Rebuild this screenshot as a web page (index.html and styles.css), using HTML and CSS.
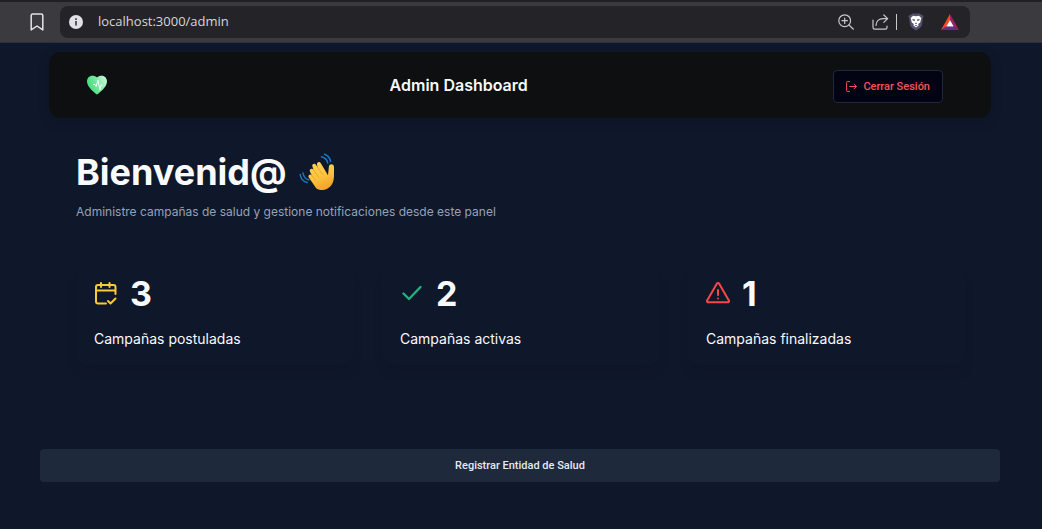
FILE: index.html
```html
<!DOCTYPE html>
<html lang="es">
<head>
<meta charset="utf-8">
<meta name="viewport" content="width=device-width, initial-scale=1">
<title>Admin Dashboard</title>
<link rel="stylesheet" href="styles.css">
</head>
<body>
<div class="toolbar">
  <button class="tool bookmark" aria-label="Guardar marcador">
    <svg width="14" height="18" viewBox="0 0 14 18"><path d="M1.2 2.5a1.6 1.6 0 0 1 1.6-1.6h8.4a1.6 1.6 0 0 1 1.6 1.6v14.4L7 13 1.2 16.900z" fill="none" stroke="#e4e3e8" stroke-width="1.5" stroke-linejoin="round"/></svg>
  </button>
  <div class="address">
    <svg width="14" height="14" viewBox="0 0 14 14"><circle cx="7" cy="7" r="7" fill="#e2e1e8"/><path d="M6.100 6h1.800v4.600H6.100zM6.100 3.200h1.800v1.700H6.100z" fill="#4a494f"/></svg>
    <div class="url-box"><input class="url" type="text" aria-label="Dirección" value="localhost:3000/admin"></div>
    <div class="actions">
      <button class="tool" aria-label="Zoom">
        <svg width="16" height="16" viewBox="0 0 16 16" fill="none" stroke="#c8c7cc" stroke-width="1.200" stroke-linecap="round"><circle cx="6.700" cy="6.700" r="5.900"/><path d="M11 11l4.400 4.200M6.700 4v5.400M4 6.700h5.400"/></svg>
      </button>
      <button class="tool share" aria-label="Compartir">
        <svg width="17" height="16" viewBox="0 0 17 16" fill="none" stroke="#c8c7cc" stroke-width="1.200" stroke-linecap="round" stroke-linejoin="round"><path d="M1 6v7.500A1.700 1.700 0 0 0 2.700 15.200h10.600a1.700 1.700 0 0 0 1.700-1.700V12"/><path d="M4 11.500C4.200 7.300 7 4.600 11 4.600h4.500M11.800 1l3.900 3.600-3.900 3.800"/></svg>
      </button>
      <span class="divider"></span>
      <button class="tool shield" aria-label="Shields">
        <svg width="16" height="18" viewBox="0 0 16 18"><path d="M4 .6h8l1.200 1.300 1.400-.2.900 2.300-.6 1.400-1 7-2 2.500L8 17.600l-3.900-2.700-2-2.500-1-7L.5 4l.9-2.300 1.400.2z" fill="#50526b"/><path d="M5 2.800l3 .5 3-.5 2.300 2.200-.4 1.800-.7 2.600-2 1.600.4 1.600L8 14.600 5.400 12.600l.4-1.600-2-1.600-.7-2.600L2.700 5z" fill="#fff"/><path d="M4.300 6l2.700.5-.3 1.500-1.900-.4zM11.700 6L9 6.500l.3 1.500 1.900-.4zM6.800 10.200L8 11l1.200-.8L8 9.600zM6.500 12.500L8 11.900l1.500.6L8 13.300z" fill="#50526b"/></svg>
      </button>
      <button class="tool" aria-label="Rewards">
        <svg width="18" height="16" viewBox="0 0 18 16"><path d="M9 0L0 16l5.500-3.400L9 6z" fill="#ff4724"/><path d="M9 0l9 16-5.500-3.400L9 6z" fill="#9e1f63"/><path d="M0 16h18l-5.500-3.400h-7z" fill="#662d91"/><path d="M9 6l3.700 6.600H5.300z" fill="#fff"/></svg>
      </button>
    </div>
  </div>
</div>

<header class="header">
  <a class="logo" href="#" aria-label="Inicio">
    <svg width="22" height="20" viewBox="0 0 22 20"><defs><linearGradient id="heart" x1="0.100" y1="0.600" x2="0.900" y2="0.300"><stop offset="0" stop-color="#4ade80"/><stop offset=".45" stop-color="#6ce79a"/><stop offset="1" stop-color="#b9f3cd"/></linearGradient></defs><path d="M11 19.500C9.800 18.600 1 12.600 1 6.500 1 3 3.300.7 6.200.7c2 0 3.700.6 4.800 1.900C12.100 1.300 13.800.7 15.800.7 18.700.7 21 3 21 6.500c0 6.100-8.800 12.100-10 13z" fill="url(#heart)"/><path d="M7 9.500h2l1.200 2 1.700-6.500 2 10 1.300-5.500 1.200 1.300" fill="none" stroke="#f1fff5" stroke-width="1" stroke-linejoin="round"/></svg>
  </a>
  <h2 class="title">Admin Dashboard</h2>
  <button class="logout">
    <svg width="11" height="11" viewBox="0 0 11 11" fill="none" stroke="currentColor" stroke-width="1" stroke-linecap="round" stroke-linejoin="round"><path d="M3.500.6H1.300a.7.7 0 0 0-.7.700v8.400a.7.700 0 0 0 .7.700h2.200M3.700 5.500h6.600M8 3.100l2.400 2.400L8 7.900"/></svg>
    Cerrar Sesión
  </button>
</header>

<main>
  <section class="welcome">
    <h1 class="greeting">Bienvenid@
      <svg width="38" height="38" viewBox="0 0 38 38" role="img" aria-label="Saludo"><defs><linearGradient id="hand" x1="0" y1="0" x2=".4" y2="1"><stop offset="0" stop-color="#ffd45c"/><stop offset=".6" stop-color="#fdc43c"/><stop offset="1" stop-color="#f3a62e"/></linearGradient></defs>
        <g fill="none" stroke="#1c79bd" stroke-width="1.500" stroke-linecap="round"><path d="M22.500 3.800c3.500.8 5.600 3 6.300 6.300M25.500 1.200c3.500 1.200 5.500 3.700 6 7.300M4 20c.6 3.700 2.500 6 5.800 7M1.200 21.500c.6 4.300 3 7 6.800 8"/></g>
        <path d="M17 35L9.800 24.500c-1.500-2.200 1.500-4.200 3-2.200L11 18.800c-1.200-2.500 2-4.200 3.500-2l-1-3c-1-2.700 2-4.200 3.500-2l1.500 2.400-.5-2.700c-.3-2.700 2.700-3.500 3.800-1.200l7.200 12 .9-8.800c.3-2.800 4.800-3 5.100.2.200 2-.1 4.200 0 6.500.2 7.800-1.400 11.500-5 14.300-4.400 3.300-9.800 3.500-13 .5z" fill="url(#hand)"/>
        <path d="M12.800 22.300l4 5.300M14.500 16.800l5.300 7.800M18.500 14.200l5.200 7.500" fill="none" stroke="#eba935" stroke-width="1" stroke-linecap="round"/></svg>
    </h1>
    <p class="lead">Administre campañas de salud y gestione notificaciones desde este panel</p>
  </section>

  <section class="stats">
    <article class="card">
      <div class="figure">
        <svg width="24" height="24" viewBox="0 0 24 24" fill="none" stroke="#fcc93a" stroke-width="2" stroke-linecap="round" stroke-linejoin="round"><path d="M7 1v4M15.500 1v4M21.500 12V5a2 2 0 0 0-2-2H4a2 2 0 0 0-2 2v14.500a2 2 0 0 0 2 2h8M2 8.500h19.500M14 19l2.500 2.500 5-5"/></svg>
        <span class="number">3</span>
      </div>
      <p class="label">Campañas postuladas</p>
    </article>
    <article class="card">
      <div class="figure">
        <svg width="24" height="24" viewBox="0 0 24 24" fill="none" stroke="#22b07d" stroke-width="2.400" stroke-linecap="round" stroke-linejoin="round"><path d="M20.500 5L9 17l-5.500-5.500"/></svg>
        <span class="number">2</span>
      </div>
      <p class="label">Campañas activas</p>
    </article>
    <article class="card">
      <div class="figure">
        <svg width="24" height="24" viewBox="0 0 24 24" fill="none" stroke="#fb4649" stroke-width="2" stroke-linecap="round" stroke-linejoin="round"><path d="M10.800 1.800L1.300 18.200A1.300 1.300 0 0 0 2.500 20.300h19a1.300 1.300 0 0 0 1.200-2.100L13.200 1.800a1.400 1.400 0 0 0-2.400 0zM12 8v5M12 16.500v.1"/></svg>
        <span class="number">1</span>
      </div>
      <p class="label">Campañas finalizadas</p>
    </article>
  </section>

  <button class="register">Registrar Entidad de Salud</button>
</main>
</body>
</html>
```

FILE: styles.css
```css
* { box-sizing: border-box; }

body {
  margin: 0;
  min-height: 100vh;
  background: #0f172a;
  color: #f8fafc;
  font-family: "Inter", "Liberation Sans", sans-serif;
}

h1, h2, p { margin: 0; }

button { cursor: pointer; }

svg { display: block; flex: none; }

.toolbar {
  display: flex;
  align-items: center;
  gap: 16px;
  padding: 4px 72px 4px 30px;
  background: #3b3a3e;
  border-top: 2px solid #202024;
  border-bottom: 1px solid #303039;
}

.tool {
  padding: 0;
  border: 0;
  background: none;
}

.address {
  flex: 1;
  display: flex;
  align-items: center;
  height: 32px;
  padding: 0 11px 0 9px;
  border-radius: 8px;
  background: #242428;
}

.url-box { flex: 1; padding-left: 15px; }

.url {
  display: block;
  width: 100%;
  height: 24px;
  padding: 0 0 2px;
  border: 0;
  outline: 0;
  background: none;
  color: #d6d5da;
  font-family: "Open Sans", "Noto Sans", sans-serif;
  font-size: 13px;
  line-height: 22px;
}

.actions { display: flex; align-items: center; }
.share { margin-left: 18px; }
.divider { width: 1px; height: 16px; margin: 0 11px 0 7px; background: #c8c7cc; }
.shield { margin-right: 17px; }

.header {
  display: flex;
  align-items: center;
  height: 66px;
  margin: 9px 51px 0 49px;
  padding: 2px 48px 0 37px;
  border-radius: 12px;
  background: #0d0f11;
  box-shadow: 0 4px 12px rgba(12, 14, 32, 0.2);
}

.logo { margin-bottom: 2px; }

.title {
  flex: 1;
  padding: 0 24px 2px 0;
  text-align: center;
  font-size: 16px;
  font-weight: 600;
}

.logout,
.register {
  height: 33px;
  border-radius: 4px;
  font-family: "Roboto", "Inter", sans-serif;
  font-size: 11px;
  font-weight: 500;
}

.logout {
  display: flex;
  align-items: center;
  gap: 6px;
  padding: 0 12px;
  border: 1px solid #1e293b;
  background: #020414;
  color: #f8535b;
}

.welcome { padding: 30px 76px 0; }

.greeting {
  display: flex;
  align-items: center;
  gap: 12px;
  font-size: 36px;
  line-height: 48px;
  font-weight: 700;
}

.lead {
  margin-top: 6px;
  color: #94a3b8;
  font-size: 12px;
  line-height: 20px;
}

.stats {
  display: grid;
  grid-template-columns: repeat(3, 1fr);
  gap: 28px;
  margin: 46px 76px 0;
}

.card {
  padding: 8px 18px 16px;
  border-radius: 12px;
  box-shadow: 0 8px 12px -4px rgba(14, 16, 34, 0.25);
}

.figure { display: flex; align-items: center; gap: 12px; }

.number {
  font-size: 34px;
  line-height: 36px;
  font-weight: 700;
}

.label {
  margin-top: 16px;
  font-size: 14px;
  line-height: 21px;
}

.register {
  display: block;
  width: calc(100% - 82px);
  margin: 84px 42px 0 40px;
  padding: 0;
  border: 0;
  background: #1e293b;
  color: #e5eaf1;
}
```
